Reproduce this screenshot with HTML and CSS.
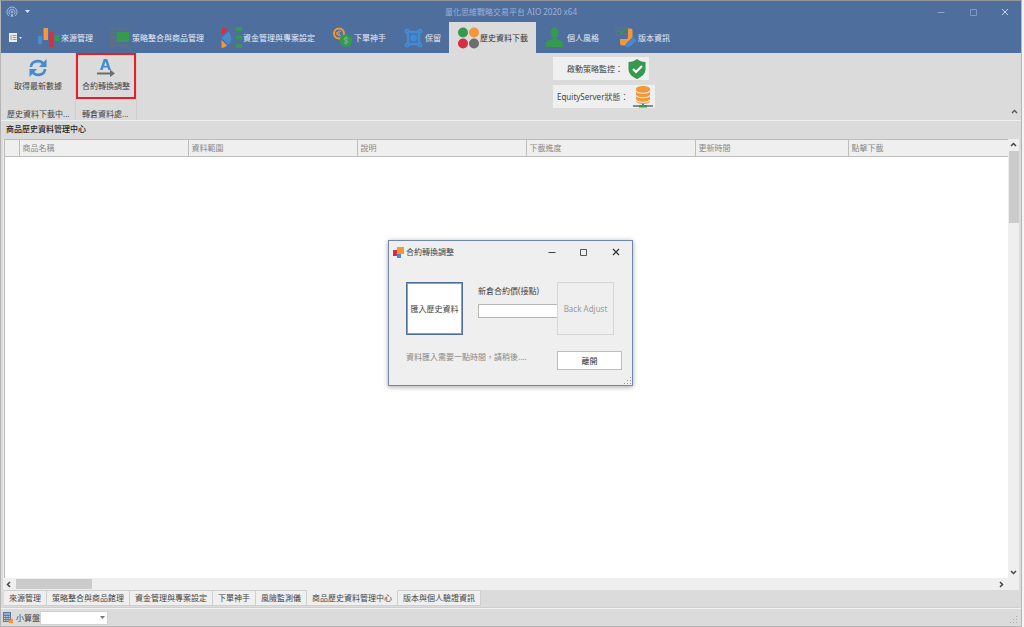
FILE: index.html
```html
<!DOCTYPE html>
<html lang="zh-Hant">
<head>
<meta charset="utf-8">
<title>量化思維戰略交易平台 AIO 2020 x64</title>
<link rel="stylesheet" href="styles.css">
</head>
<body>
<div class="window">
  <header class="header">
    <div class="titlebar">
      <div class="quick">
        <svg class="logo" viewBox="0 0 12 12" fill="none" stroke="#a9bddb" stroke-width="1"><path d="M3 10A5 5 0 1 1 9 10M4 8.500A3 3 0 1 1 8 8.500"/><circle cx="6" cy="6" r="1"/><path d="M5 11l1-3 1 3"/></svg>
        <button class="plain" aria-label="自訂"><svg width="5" height="3" viewBox="0 0 5 3"><path d="M0 0h5L2.500 3z" fill="#e6ecf5"/></svg></button>
      </div>
      <h1 class="title">量化思維戰略交易平台 AIO 2020 x64</h1>
      <div class="controls">
        <button class="plain" aria-label="最小化"><svg width="8" height="8" viewBox="0 0 8 8" stroke="#8ea6cb"><path d="M.5 4.500h7"/></svg></button>
        <button class="plain" aria-label="最大化"><svg width="8" height="8" viewBox="0 0 8 8" fill="none" stroke="#7f99c2"><path d="M1.500 1.500h6v6h-6z"/></svg></button>
        <button class="plain" aria-label="關閉"><svg width="8" height="8" viewBox="0 0 8 8" stroke="#c3d0e5"><path d="M1 1l6 6M7 1L1 7"/></svg></button>
      </div>
    </div>
    <nav class="tabs">
      <button class="plain filemenu" aria-label="檔案"><svg width="13" height="10" viewBox="0 0 13 10"><path d="M0 0h8v9H0z" fill="#eee"/><path d="M3.500 2.500h4M3.500 4.500h4M3.500 6.500h4" stroke="#999"/><path d="M1 2h2v5H1z" fill="#c4c4c4"/><path d="M10 4h3l-1.500 2z" fill="#dde5f0"/></svg></button>
      <button class="tab"><svg viewBox="0 0 22 22"><path d="M0 9h4v8H0z" fill="#4a8bd0"/><path d="M5.500 1H10v12H5.500z" fill="#f2983a"/><path d="M11 5h4.500v15H11z" fill="#d62f45"/><path d="M16.500 8H21v6h-4.500z" fill="#35994f"/></svg>來源管理</button>
      <button class="tab"><svg viewBox="0 0 22 22"><path d="M1 1.500h19M1 6h6M1 10.500h6M1 14.500h6M1 18.500h19" stroke="#61707f" stroke-width="2.500" stroke-dasharray="5 2"/><path d="M7.500 5H20v10H7.500z" fill="#35994f"/></svg>策略整合與商品管理</button>
      <button class="tab"><svg viewBox="0 0 22 22"><path d="M2 0c2 .5 4 1.500 5.500 3L2 8z" fill="#d62f45"/><path d="M8.500 4.500a9 9 0 0 1 0 13L1.500 11z" fill="#4a8bd0"/><path d="M1.500 13l5.500 5.500c-1.500 1.500-3.500 2.500-5.500 2.500z" fill="#f2983a"/><path d="M9 2h5M12 5v12M12 11h3M9 19h5" stroke="#5d7389" stroke-dasharray="2 1"/><path d="M16 0h6v4h-6zM16 8.500h6v4h-6zM16 17h6v4h-6z" fill="#35994f"/></svg>資金管理與專案設定</button>
      <button class="tab"><svg viewBox="0 0 22 22" fill="none"><circle cx="8" cy="6.500" r="5" stroke="#f2983a" stroke-width="2"/><path d="M10.300 4.800a2.400 2.400 0 1 0 0 3.400M5 5.900h4M5 7.300h4" stroke="#f2983a"/><circle cx="15" cy="13.500" r="6.300" fill="#35994f"/><path d="M17 11.500c-2-1.300-4-.5-4 .6 0 1.900 4 1.100 4 2.900 0 1.200-2.500 1.600-4 .6M15 9.500v8" stroke="#75bd8a" stroke-width=".9"/></svg>下單神手</button>
      <button class="tab"><svg viewBox="0 0 22 22" fill="none"><path d="M5 0h12M5 20.500h12M1.500 5v11M21 5v11" stroke="#5b6f8c" stroke-width=".8"/><path d="M6 5h11v12H6z" stroke="#438bd2" stroke-width="2.600"/><path d="M7 6h9v10H7z" fill="#4478b4"/><circle cx="11.500" cy="11" r="3.300" fill="#438bd2"/><g fill="#4e7db8" stroke="#438bd2" stroke-width="1.600"><circle cx="5" cy="4" r="1.700"/><circle cx="18" cy="4" r="1.700"/><circle cx="5" cy="18" r="1.700"/><circle cx="18" cy="18" r="1.700"/></g></svg>保留</button>
      <button class="tab active" aria-current="page"><svg viewBox="0 0 22 22"><circle cx="6" cy="5.500" r="5" fill="#35994f"/><circle cx="17" cy="5.500" r="5" fill="#f2983a"/><circle cx="6" cy="16.500" r="5" fill="#d62f45"/><circle cx="17" cy="16.500" r="5" fill="#6b6e73"/></svg>歷史資料下載</button>
      <button class="tab"><svg viewBox="0 0 22 22"><path d="M6.500 5c0-6 8-6 8 0 0 3-1 5-2.500 6v1c3 .8 7 2 7 4v4H2v-4c0-2 4-3.200 7-4v-1C7.500 10 6.500 8 6.500 5z" fill="#35994f"/></svg>個人風格</button>
      <button class="tab"><svg viewBox="0 0 22 22" fill="none"><path d="M12 6v2H1V1h10" stroke="#64747d"/><path d="M13 1.500h2c2 0 2.500 1 2.500 2.500V11L11 18.500H7.500c-2 0-2.500-1-2.500-3V12h6c1.500 0 2-.5 2-2z" fill="#f2983a"/><path d="M3.500 3.500l3 3L12.500.5" stroke="#35994f" stroke-width="1.600"/><path d="M18.500 10l3.500 3.500-7 6.500-5 1.500 1.500-5z" fill="#438bd2" stroke="#4e6e9e" stroke-width=".8"/></svg>版本資訊</button>
    </nav>
  </header>

  <section class="ribbon">
    <div class="group">
      <button class="tool"><svg width="18" height="18" viewBox="0 0 18 18" fill="none" stroke="#438bd2" stroke-width="2.600"><path d="M2 8c0-6 9-8 12.500-3M16 10c0 6-9 8-12.500 3"/><path d="M17.500 0v8H10zM.5 18v-8H8z" fill="#438bd2" stroke="none"/></svg>取得最新數據</button>
      <div class="caption">歷史資料下載中...</div>
    </div>
    <div class="group">
      <button class="tool marked"><svg width="18" height="18" viewBox="0 0 18 18"><path d="M3 11L6.800 0h3.400L14 11h-2.600l-.8-2.400H6.400L5.600 11zM7 6.800h3L8.500 2.500z" fill="#438bd2"/><path d="M0 13.500h13v-3l5 4-5 3.500v-2.500H0z" fill="#6b6e73"/></svg>合約轉換調整</button>
      <div class="caption">轉倉資料處...</div>
    </div>
    <div class="states">
      <div class="state state-short">啟動策略監控： <svg width="18" height="20" viewBox="0 0 18 20"><path d="M9 0c2.500 2 5 3 8.500 3v7c0 5-4 8-8.500 10C4.500 18 .5 15 .5 10V3C4 3 6.500 2 9 0z" fill="#35994f"/><path d="M5 10l3 3 6-6" stroke="#fff" stroke-width="2.200" fill="none"/></svg></div>
      <div class="state">EquityServer狀態： <svg width="20" height="22" viewBox="0 0 20 22"><path d="M3 3c0-4 14-4 14 0v12c0 4-14 4-14 0z" fill="#f2983a"/><path d="M3 5c2 3 12 3 14 0M3 9.500c2 3 12 3 14 0M3 14c2 3 12 3 14 0" fill="none" stroke="#f3eee8" stroke-width="1.200"/><path d="M0 20h20" stroke="#888b8e" stroke-width="2"/><path d="M9 18h2v1h3v2.500H6V19h3z" fill="#35994f"/></svg></div>
    </div>
    <button class="plain collapse" aria-label="收合"><svg width="7" height="5" viewBox="0 0 7 5" fill="none" stroke="#555" stroke-width="1.300"><path d="M1 4l2.500-2.500L6 4"/></svg></button>
  </section>

  <main class="content">
    <h2 class="heading">商品歷史資料管理中心</h2>
    <div class="grid">
      <div class="sheet">
        <table>
          <colgroup><col class="c-mark"><col class="c-wide"><col class="c-wide"><col class="c-wide"><col class="c-wide"><col class="c-time"><col></colgroup>
          <thead><tr><th></th><th>商品名稱</th><th>資料範圍</th><th>說明</th><th>下載進度</th><th>更新時間</th><th>點擊下載</th></tr></thead>
        </table>
      </div>
      <div class="vscroll">
        <svg width="7" height="5" viewBox="0 0 7 5" fill="none" stroke="#444" stroke-width="1.500"><path d="M1 4l2.500-2.500L6 4"/></svg>
        <div class="vtrack"><div class="vthumb"></div></div>
        <svg width="7" height="5" viewBox="0 0 7 5" fill="none" stroke="#444" stroke-width="1.500"><path d="M1 1l2.500 2.500L6 1"/></svg>
      </div>
    </div>
    <div class="hscroll">
      <svg width="5" height="7" viewBox="0 0 5 7" fill="none" stroke="#444" stroke-width="1.500"><path d="M4 1L1.500 3.500 4 6"/></svg>
      <div class="htrack"><div class="hthumb"></div></div>
      <svg width="5" height="7" viewBox="0 0 5 7" fill="none" stroke="#444" stroke-width="1.500"><path d="M1 1l2.500 2.500L1 6"/></svg>
    </div>
    <nav class="pages">
      <button class="page">來源管理</button>
      <button class="page">策略整合與商品館理</button>
      <button class="page">資金管理與專案設定</button>
      <button class="page">下單神手</button>
      <button class="page">風險監測儀</button>
      <button class="page current">商品歷史資料管理中心</button>
      <button class="page">版本與個人驗證資訊</button>
    </nav>
  </main>

  <footer class="status">
    <svg width="10" height="11" viewBox="0 0 10 11"><path d="M0 0h8v10H0z" fill="#62799b"/><path d="M1 1h6v2H1z" fill="#7fb2ea"/><path d="M1 4.500h6M1 6.500h6M1 8.500h6" stroke="#c5d0de" stroke-dasharray="1.500 .8"/><path d="M5 8h2.500V6.500L10 7v4H6z" fill="#f2983a"/></svg>
    <label for="abacus">小算盤</label>
    <div class="combo">
      <select id="abacus"><option></option></select>
      <svg width="5" height="3" viewBox="0 0 5 3"><path d="M0 0h5L2.500 3z" fill="#777"/></svg>
    </div>
    <svg class="grip" width="8" height="8" viewBox="0 0 8 8" fill="#aaa"><path d="M6 0h1v1H6zM3 3h1v1H3zM6 3h1v1H6zM0 6h1v1H0zM3 6h1v1H3zM6 6h1v1H6z"/></svg>
  </footer>
</div>

<div class="layer">
  <section class="dialog" role="dialog" aria-labelledby="dlg-title">
    <div class="dialog-bar">
      <svg width="12" height="12" viewBox="0 0 12 12"><path d="M1 4h4v6H1z" fill="#d62f45"/><path d="M5 8h4v4H5z" fill="#438bd2"/><path d="M5 1h7v7H5z" fill="#f2983a"/></svg>
      <h2 id="dlg-title">合約轉換調整</h2>
      <div class="controls">
        <button class="plain" aria-label="最小化"><svg width="8" height="8" viewBox="0 0 8 8" stroke="#444"><path d="M.5 4.500h7"/></svg></button>
        <button class="plain" aria-label="最大化"><svg width="8" height="8" viewBox="0 0 8 8" fill="none" stroke="#555"><path d="M.5 1.500h6v6h-6z"/></svg></button>
        <button class="plain" aria-label="關閉"><svg width="8" height="8" viewBox="0 0 8 8" stroke="#333" stroke-width="1.200"><path d="M1 1l6 6M7 1L1 7"/></svg></button>
      </div>
    </div>
    <div class="dialog-main">
      <button class="box import">匯入歷史資料</button>
      <div class="field">
        <label for="price">新倉合約價(接點)</label>
        <input id="price" type="text">
      </div>
      <button class="box adjust" disabled>Back Adjust</button>
    </div>
    <div class="dialog-foot">
      <p>資料匯入需要一點時間，請稍後....</p>
      <button class="leave">離開</button>
    </div>
    <svg class="corner" width="8" height="8" viewBox="0 0 8 8" fill="#999"><path d="M6 0h1v1H6zM3 3h1v1H3zM6 3h1v1H6zM0 6h1v1H0zM3 6h1v1H3zM6 6h1v1H6z"/></svg>
  </section>
</div>
</body>
</html>
```
FILE: styles.css
```css
* { box-sizing: border-box; }

body {
  margin: 0;
  height: 100vh;
  overflow: hidden;
  padding-right: 2px;
  background: #f4f4f4;
  color: #444;
  font: 8px/12px "Noto Sans", "Noto Sans CJK TC", sans-serif;
}

h1, h2, p { margin: 0; font: inherit; }
button, input, select { font: inherit; color: inherit; border-radius: 0; }
svg { display: block; flex: none; }

.plain {
  display: flex;
  align-items: center;
  justify-content: center;
  padding: 0;
  border: 0;
  background: none;
}

.window {
  display: flex;
  flex-direction: column;
  height: 100%;
  border: 1px solid #b5b5b5;
  border-top-color: #92959a;
  background: #dbdbdb;
}

.header { background: #4e6e9e; }
.titlebar {
  display: grid;
  grid-template-columns: 1fr auto 1fr;
  align-items: center;
  height: 21px;
}
.quick { display: flex; align-items: center; gap: 7px; padding-left: 5px; }
.logo { width: 12px; height: 12px; }
.title { color: #9fb2d2; }
.controls { display: flex; justify-content: flex-end; }
.controls .plain { width: 32px; height: 20px; }

.tabs { display: flex; height: 31px; }
.filemenu { width: 22px; margin-right: 7px; padding-left: 6px; }
.tab {
  display: flex;
  align-items: center;
  gap: 1px;
  padding: 0 8px;
  border: 0;
  background: none;
  color: #e8edf5;
  white-space: nowrap;
}
.tab svg { width: 22px; height: 22px; }
.tab.active { background: #dbdbdb; color: #333; }

.ribbon {
  display: flex;
  height: 68px;
  border-bottom: 1px solid #efefef;
}
.group {
  display: flex;
  flex-direction: column;
  justify-content: space-between;
  border-right: 1px solid #cecece;
}
.group:first-child { width: 75px; }
.group:nth-child(2) { width: 61px; }
.tool {
  display: flex;
  flex-direction: column;
  align-items: center;
  gap: 3px;
  height: 46px;
  padding: 4px 0 0;
  border: 2px solid transparent;
  background: none;
  white-space: nowrap;
}
.tool.marked { border-color: #ec1c24; }
.caption { padding: 0 6px; white-space: nowrap; }

.states {
  display: flex;
  flex-direction: column;
  align-items: flex-start;
  gap: 5px;
  margin-left: 416px;
  padding-top: 4px;
}
.state {
  display: flex;
  align-items: center;
  gap: 5px;
  height: 23px;
  padding: 0 2px 0 4px;
  background: #efefef;
  white-space: nowrap;
}
.state-short { padding: 0 3px 0 14px; }
.collapse { align-self: flex-end; width: 14px; height: 18px; margin-left: auto; }

.content { display: flex; flex: 1; flex-direction: column; min-height: 0; padding: 0 2px; }
.heading { height: 18px; padding: 2px 3px; color: #222; font-weight: 500; }
.grid { display: flex; flex: 1; min-height: 0; background: #efefef; }
.sheet { flex: 1; margin-left: 1px; border-left: 1px solid #bbb; background: #fff; }

table { width: 100%; table-layout: fixed; border-collapse: collapse; }
th {
  height: 17px;
  padding: 0 3px;
  border: solid #bdbdbd;
  border-width: 1px 1px 1px 0;
  background: #efefef;
  color: #888;
  font-weight: normal;
  text-align: left;
}
th:last-child { border-right: 0; }
.c-mark { width: 14px; }
.c-wide { width: 169px; }
.c-wide + .c-time { width: 153px; }

.vscroll {
  display: flex;
  flex-direction: column;
  align-items: center;
  gap: 4px;
  width: 11px;
  padding: 3px 0 3px;
}
.vtrack { flex: 1; width: 10px; }
.vthumb { height: 72px; background: #cbcbcb; }
.hscroll {
  display: flex;
  align-items: center;
  gap: 5px;
  height: 12px;
  padding: 0 15px 0 3px;
  background: #efefef;
}
.htrack { flex: 1; height: 10px; }
.hthumb { width: 76px; height: 10px; background: #cbcbcb; }

.pages { display: flex; height: 18px; padding-left: 1px; border-bottom: 1px solid #cfcfcf; }
.page {
  height: 16px;
  padding: 0 5px;
  border: 1px solid #cfcfcf;
  border-left: 0;
  background: #efefef;
  white-space: nowrap;
}
.page.current { border-top-color: #efefef; }

.status {
  display: flex;
  align-items: center;
  height: 18px;
  padding: 0 3px 0 2px;
  border-top: 1px solid #f2f2f2;
}
.status label { margin-left: 3px; }
.combo { display: grid; align-items: center; width: 68px; }
.combo > * { grid-area: 1 / 1; }
.combo svg { justify-self: end; margin-right: 3px; pointer-events: none; }
select {
  appearance: none;
  width: 100%;
  height: 14px;
  padding: 0 10px 0 2px;
  border: 1px solid #d2d2d2;
  background: #fff;
}
.grip { align-self: flex-end; margin: 0 0 2px auto; }

.layer {
  position: absolute;
  inset: 0;
  display: flex;
  align-items: center;
  justify-content: center;
  padding: 0 3px 1px 0;
  pointer-events: none;
}
.dialog {
  position: relative;
  width: 245px;
  padding-bottom: 15px;
  border: 1px solid #6f87aa;
  background: #efefef;
  box-shadow: 0 1px 5px rgba(0, 0, 0, .35);
  pointer-events: auto;
}
.dialog-bar { display: flex; align-items: center; height: 21px; padding-left: 3px; }
.dialog-bar h2 { margin-left: 2px; }
.dialog-bar .controls { margin-left: auto; }
.dialog-main { display: flex; padding: 20px 18px 0 17px; }
.box { flex: none; width: 57px; height: 53px; padding: 0; white-space: nowrap; }
.import { border: 1px solid #4e6e9e; outline: 1px solid #8ba0c0; outline-offset: -2px; background: #fff; }
.adjust { border: 1px solid #d6d6d6; background: #efefef; color: #999; }
.field { flex: 1; padding: 3px 0 0 15px; white-space: nowrap; }
.field label { display: block; }
.field input {
  display: block;
  width: 100%;
  height: 14px;
  margin-top: 7px;
  padding: 0 2px;
  border: 1px solid #b5b5b5;
  border-right: 0;
  background: #fff;
}
.dialog-foot {
  display: flex;
  justify-content: space-between;
  padding: 16px 10px 0 17px;
  color: #888;
}
.leave {
  width: 65px;
  height: 19px;
  padding: 0;
  border: 1px solid #bdbdbd;
  background: #fff;
  color: #333;
}
.corner { position: absolute; right: 0; bottom: 0; }
```
